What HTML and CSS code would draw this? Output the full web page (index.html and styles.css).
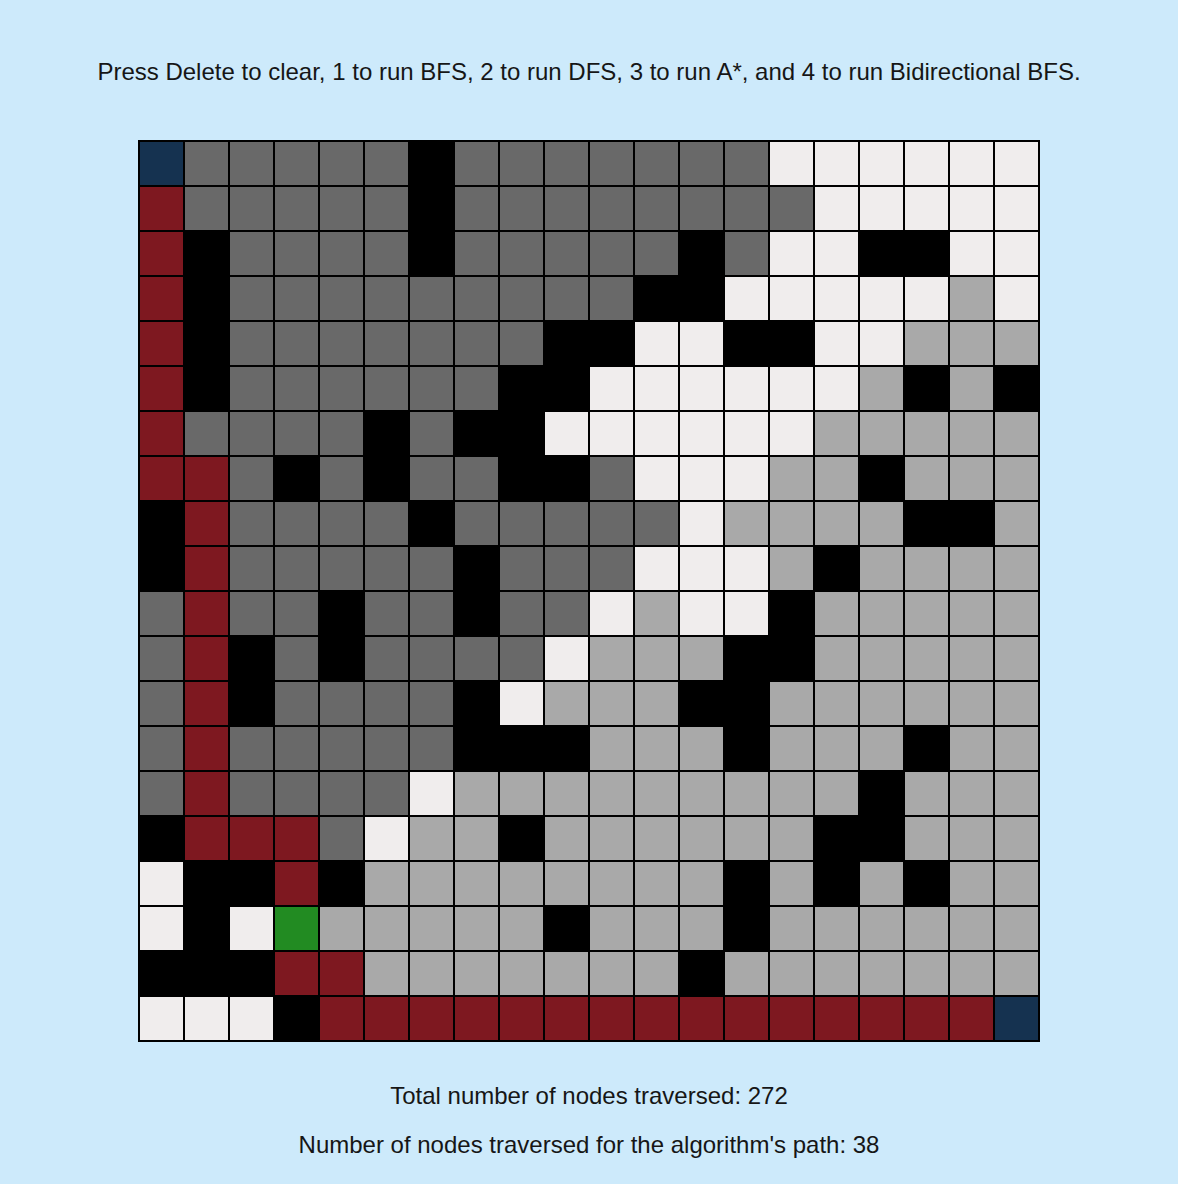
FILE: index.html
```html
<!DOCTYPE html>
<html lang="en">
<head>
<meta charset="utf-8">
<title>Pathfinding Visualizer</title>
<link rel="stylesheet" href="styles.css">
</head>
<body>
<main class="page">
  <p class="instructions">Press Delete to clear, 1 to run BFS, 2 to run DFS, 3 to run A*, and 4 to run Bidirectional BFS.</p>
  <div class="grid">
    <div class="c n"></div><div class="c v"></div><div class="c v"></div><div class="c v"></div><div class="c v"></div><div class="c v"></div><div class="c w"></div><div class="c v"></div><div class="c v"></div><div class="c v"></div><div class="c v"></div><div class="c v"></div><div class="c v"></div><div class="c v"></div><div class="c u"></div><div class="c u"></div><div class="c u"></div><div class="c u"></div><div class="c u"></div><div class="c u"></div>
    <div class="c p"></div><div class="c v"></div><div class="c v"></div><div class="c v"></div><div class="c v"></div><div class="c v"></div><div class="c w"></div><div class="c v"></div><div class="c v"></div><div class="c v"></div><div class="c v"></div><div class="c v"></div><div class="c v"></div><div class="c v"></div><div class="c v"></div><div class="c u"></div><div class="c u"></div><div class="c u"></div><div class="c u"></div><div class="c u"></div>
    <div class="c p"></div><div class="c w"></div><div class="c v"></div><div class="c v"></div><div class="c v"></div><div class="c v"></div><div class="c w"></div><div class="c v"></div><div class="c v"></div><div class="c v"></div><div class="c v"></div><div class="c v"></div><div class="c w"></div><div class="c v"></div><div class="c u"></div><div class="c u"></div><div class="c w"></div><div class="c w"></div><div class="c u"></div><div class="c u"></div>
    <div class="c p"></div><div class="c w"></div><div class="c v"></div><div class="c v"></div><div class="c v"></div><div class="c v"></div><div class="c v"></div><div class="c v"></div><div class="c v"></div><div class="c v"></div><div class="c v"></div><div class="c w"></div><div class="c w"></div><div class="c u"></div><div class="c u"></div><div class="c u"></div><div class="c u"></div><div class="c u"></div><div class="c s"></div><div class="c u"></div>
    <div class="c p"></div><div class="c w"></div><div class="c v"></div><div class="c v"></div><div class="c v"></div><div class="c v"></div><div class="c v"></div><div class="c v"></div><div class="c v"></div><div class="c w"></div><div class="c w"></div><div class="c u"></div><div class="c u"></div><div class="c w"></div><div class="c w"></div><div class="c u"></div><div class="c u"></div><div class="c s"></div><div class="c s"></div><div class="c s"></div>
    <div class="c p"></div><div class="c w"></div><div class="c v"></div><div class="c v"></div><div class="c v"></div><div class="c v"></div><div class="c v"></div><div class="c v"></div><div class="c w"></div><div class="c w"></div><div class="c u"></div><div class="c u"></div><div class="c u"></div><div class="c u"></div><div class="c u"></div><div class="c u"></div><div class="c s"></div><div class="c w"></div><div class="c s"></div><div class="c w"></div>
    <div class="c p"></div><div class="c v"></div><div class="c v"></div><div class="c v"></div><div class="c v"></div><div class="c w"></div><div class="c v"></div><div class="c w"></div><div class="c w"></div><div class="c u"></div><div class="c u"></div><div class="c u"></div><div class="c u"></div><div class="c u"></div><div class="c u"></div><div class="c s"></div><div class="c s"></div><div class="c s"></div><div class="c s"></div><div class="c s"></div>
    <div class="c p"></div><div class="c p"></div><div class="c v"></div><div class="c w"></div><div class="c v"></div><div class="c w"></div><div class="c v"></div><div class="c v"></div><div class="c w"></div><div class="c w"></div><div class="c v"></div><div class="c u"></div><div class="c u"></div><div class="c u"></div><div class="c s"></div><div class="c s"></div><div class="c w"></div><div class="c s"></div><div class="c s"></div><div class="c s"></div>
    <div class="c w"></div><div class="c p"></div><div class="c v"></div><div class="c v"></div><div class="c v"></div><div class="c v"></div><div class="c w"></div><div class="c v"></div><div class="c v"></div><div class="c v"></div><div class="c v"></div><div class="c v"></div><div class="c u"></div><div class="c s"></div><div class="c s"></div><div class="c s"></div><div class="c s"></div><div class="c w"></div><div class="c w"></div><div class="c s"></div>
    <div class="c w"></div><div class="c p"></div><div class="c v"></div><div class="c v"></div><div class="c v"></div><div class="c v"></div><div class="c v"></div><div class="c w"></div><div class="c v"></div><div class="c v"></div><div class="c v"></div><div class="c u"></div><div class="c u"></div><div class="c u"></div><div class="c s"></div><div class="c w"></div><div class="c s"></div><div class="c s"></div><div class="c s"></div><div class="c s"></div>
    <div class="c v"></div><div class="c p"></div><div class="c v"></div><div class="c v"></div><div class="c w"></div><div class="c v"></div><div class="c v"></div><div class="c w"></div><div class="c v"></div><div class="c v"></div><div class="c u"></div><div class="c s"></div><div class="c u"></div><div class="c u"></div><div class="c w"></div><div class="c s"></div><div class="c s"></div><div class="c s"></div><div class="c s"></div><div class="c s"></div>
    <div class="c v"></div><div class="c p"></div><div class="c w"></div><div class="c v"></div><div class="c w"></div><div class="c v"></div><div class="c v"></div><div class="c v"></div><div class="c v"></div><div class="c u"></div><div class="c s"></div><div class="c s"></div><div class="c s"></div><div class="c w"></div><div class="c w"></div><div class="c s"></div><div class="c s"></div><div class="c s"></div><div class="c s"></div><div class="c s"></div>
    <div class="c v"></div><div class="c p"></div><div class="c w"></div><div class="c v"></div><div class="c v"></div><div class="c v"></div><div class="c v"></div><div class="c w"></div><div class="c u"></div><div class="c s"></div><div class="c s"></div><div class="c s"></div><div class="c w"></div><div class="c w"></div><div class="c s"></div><div class="c s"></div><div class="c s"></div><div class="c s"></div><div class="c s"></div><div class="c s"></div>
    <div class="c v"></div><div class="c p"></div><div class="c v"></div><div class="c v"></div><div class="c v"></div><div class="c v"></div><div class="c v"></div><div class="c w"></div><div class="c w"></div><div class="c w"></div><div class="c s"></div><div class="c s"></div><div class="c s"></div><div class="c w"></div><div class="c s"></div><div class="c s"></div><div class="c s"></div><div class="c w"></div><div class="c s"></div><div class="c s"></div>
    <div class="c v"></div><div class="c p"></div><div class="c v"></div><div class="c v"></div><div class="c v"></div><div class="c v"></div><div class="c u"></div><div class="c s"></div><div class="c s"></div><div class="c s"></div><div class="c s"></div><div class="c s"></div><div class="c s"></div><div class="c s"></div><div class="c s"></div><div class="c s"></div><div class="c w"></div><div class="c s"></div><div class="c s"></div><div class="c s"></div>
    <div class="c w"></div><div class="c p"></div><div class="c p"></div><div class="c p"></div><div class="c v"></div><div class="c u"></div><div class="c s"></div><div class="c s"></div><div class="c w"></div><div class="c s"></div><div class="c s"></div><div class="c s"></div><div class="c s"></div><div class="c s"></div><div class="c s"></div><div class="c w"></div><div class="c w"></div><div class="c s"></div><div class="c s"></div><div class="c s"></div>
    <div class="c u"></div><div class="c w"></div><div class="c w"></div><div class="c p"></div><div class="c w"></div><div class="c s"></div><div class="c s"></div><div class="c s"></div><div class="c s"></div><div class="c s"></div><div class="c s"></div><div class="c s"></div><div class="c s"></div><div class="c w"></div><div class="c s"></div><div class="c w"></div><div class="c s"></div><div class="c w"></div><div class="c s"></div><div class="c s"></div>
    <div class="c u"></div><div class="c w"></div><div class="c u"></div><div class="c g"></div><div class="c s"></div><div class="c s"></div><div class="c s"></div><div class="c s"></div><div class="c s"></div><div class="c w"></div><div class="c s"></div><div class="c s"></div><div class="c s"></div><div class="c w"></div><div class="c s"></div><div class="c s"></div><div class="c s"></div><div class="c s"></div><div class="c s"></div><div class="c s"></div>
    <div class="c w"></div><div class="c w"></div><div class="c w"></div><div class="c p"></div><div class="c p"></div><div class="c s"></div><div class="c s"></div><div class="c s"></div><div class="c s"></div><div class="c s"></div><div class="c s"></div><div class="c s"></div><div class="c w"></div><div class="c s"></div><div class="c s"></div><div class="c s"></div><div class="c s"></div><div class="c s"></div><div class="c s"></div><div class="c s"></div>
    <div class="c u"></div><div class="c u"></div><div class="c u"></div><div class="c w"></div><div class="c p"></div><div class="c p"></div><div class="c p"></div><div class="c p"></div><div class="c p"></div><div class="c p"></div><div class="c p"></div><div class="c p"></div><div class="c p"></div><div class="c p"></div><div class="c p"></div><div class="c p"></div><div class="c p"></div><div class="c p"></div><div class="c p"></div><div class="c n"></div>
  </div>
  <div class="stats">
    <p class="stat">Total number of nodes traversed: 272</p>
    <p class="stat">Number of nodes traversed for the algorithm's path: 38</p>
  </div>
</main>
</body>
</html>
```

FILE: styles.css
```css
html, body {
  margin: 0;
  padding: 0;
}

body {
  background: #cdeafb;
  color: #161616;
  font-family: "Liberation Sans", Arial, Helvetica, sans-serif;
  min-height: 1184px;
}

.page {
  display: flex;
  flex-direction: column;
  align-items: center;
  padding-top: 58px;
}

.instructions {
  margin: 0;
  font-size: 24px;
  line-height: 28px;
  text-align: center;
  white-space: nowrap;
}

.grid {
  margin-top: 54px;
  display: grid;
  grid-template-columns: repeat(20, 45px);
  grid-auto-rows: 45px;
  border: 1px solid #000;
}

.c {
  box-sizing: border-box;
  border: 1px solid #000;
}

.n { background: #153250; }
.v { background: #696969; }
.w { background: #000; }
.u { background: #f0eded; }
.s { background: #a9a9a9; }
.p { background: #7e1820; }
.g { background: #228b22; }

.stats {
  margin-top: 40px;
  display: flex;
  flex-direction: column;
  align-items: center;
  gap: 21px;
}

.stat {
  margin: 0;
  font-size: 24px;
  line-height: 28px;
  text-align: center;
  white-space: nowrap;
}
```
